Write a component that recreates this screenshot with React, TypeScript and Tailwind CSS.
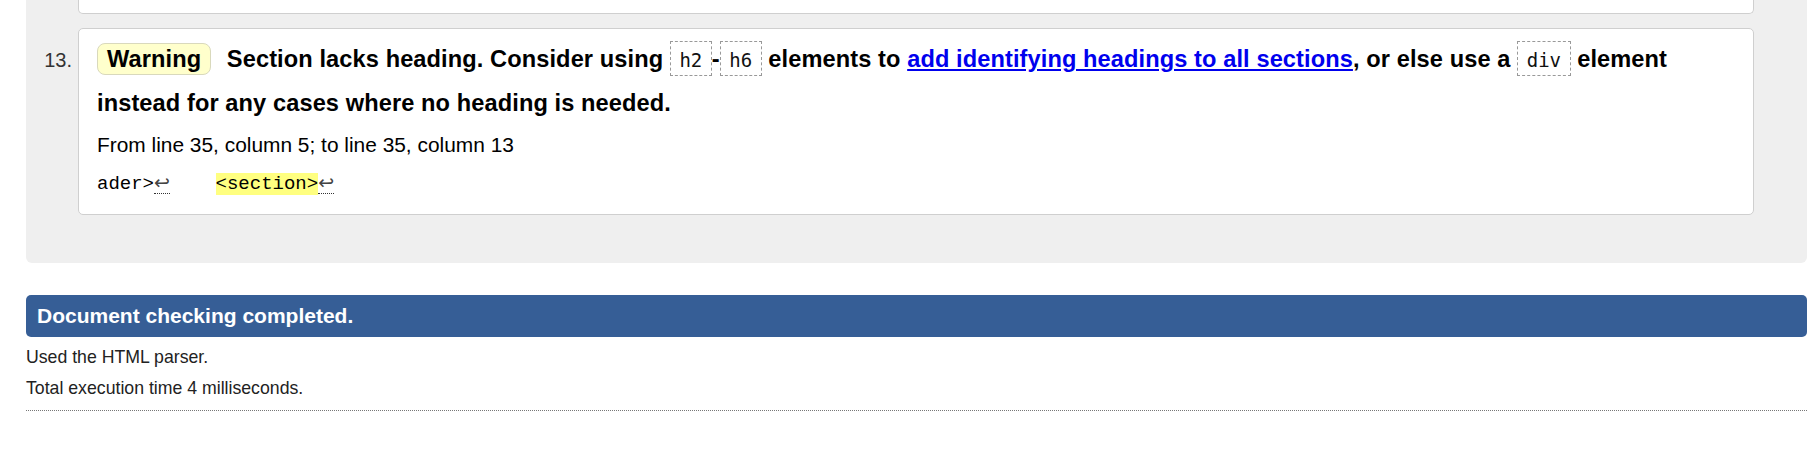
import React from "react";

const sans = { fontFamily: '"Liberation Sans", Arial, sans-serif' };

function Code({ children }: { children: React.ReactNode }) {
  return (
    <code className="font-normal tracking-normal border border-dashed border-[#999] bg-white px-[8.5px] pt-[7px] pb-[4px] text-[19px] text-[#111] [font-family:'DejaVu_Sans_Mono',monospace]">
      {children}
    </code>
  );
}

function Lf() {
  return (
    <span className="border-b border-dotted border-[#333] text-[#444] [font-family:'DejaVu_Sans',sans-serif]">
      ↩
    </span>
  );
}

export default function App() {
  return (
    <div className="bg-white w-[1816px] h-[453px] overflow-hidden text-black" style={sans}>
      <div className="ml-[26px] w-[1781px] bg-[#efefef] rounded-b-[6px] pb-[48px]">
        <div className="ml-[52px] mr-[53px] h-[14px] bg-white border border-t-0 border-[#cfcfcf] rounded-b-[5px]" />
        <div className="flex items-baseline mt-[14px]">
          <div className="w-[52px] shrink-0 text-right pr-[6px] text-[20px] text-[#333]">13.</div>
          <div className="flex-1 mr-[53px] bg-white border border-[#cfcfcf] rounded-[5px] pl-[18px] pr-[18px] pt-[9px] pb-[17px]">
            <p className="leading-[43px] text-[23.6px] font-bold tracking-[0.1px]">
              <span className="inline-block leading-[26px] py-[2px] px-[9px] mr-[9px] bg-[#ffffcc] border border-[#d9d9bc] rounded-[8px]">
                Warning
              </span>{" "}
              Section lacks heading. Consider using <Code>h2</Code>-<Code>h6</Code> elements to{" "}
              <a href="#" className="text-[#0000ee] underline">
                add identifying headings to all sections
              </a>
              , or else use a <Code>div</Code> element
              <br />
              instead for any cases where no heading is needed.
            </p>
            <p className="mt-[5px] leading-[29px] text-[20.9px]">
              From line 35, column 5; to line 35, column 13
            </p>
            <p className="mt-[10px] leading-[26px] text-[19px] whitespace-pre [font-family:'DejaVu_Sans_Mono',monospace]">
              <code>
                ader&gt;<Lf />{"    "}
                <mark className="bg-[#ffff80] text-black">&lt;section&gt;</mark>
                <Lf />
              </code>
            </p>
          </div>
        </div>
      </div>
      <div className="mt-[32px] ml-[26px] w-[1781px] h-[42px] rounded-[5px] bg-[#365e96] flex items-center pl-[11px] text-white font-bold text-[21px]">
        Document checking completed.
      </div>
      <p className="mt-[5px] ml-[26px] leading-[31px] text-[17.7px] text-[#222]">Used the HTML parser.</p>
      <p className="ml-[26px] leading-[31px] text-[17.7px] text-[#222]">Total execution time 4 milliseconds.</p>
      <div className="mt-[6px] ml-[26px] w-[1781px] border-t border-dotted border-[#777]" />
    </div>
  );
}
